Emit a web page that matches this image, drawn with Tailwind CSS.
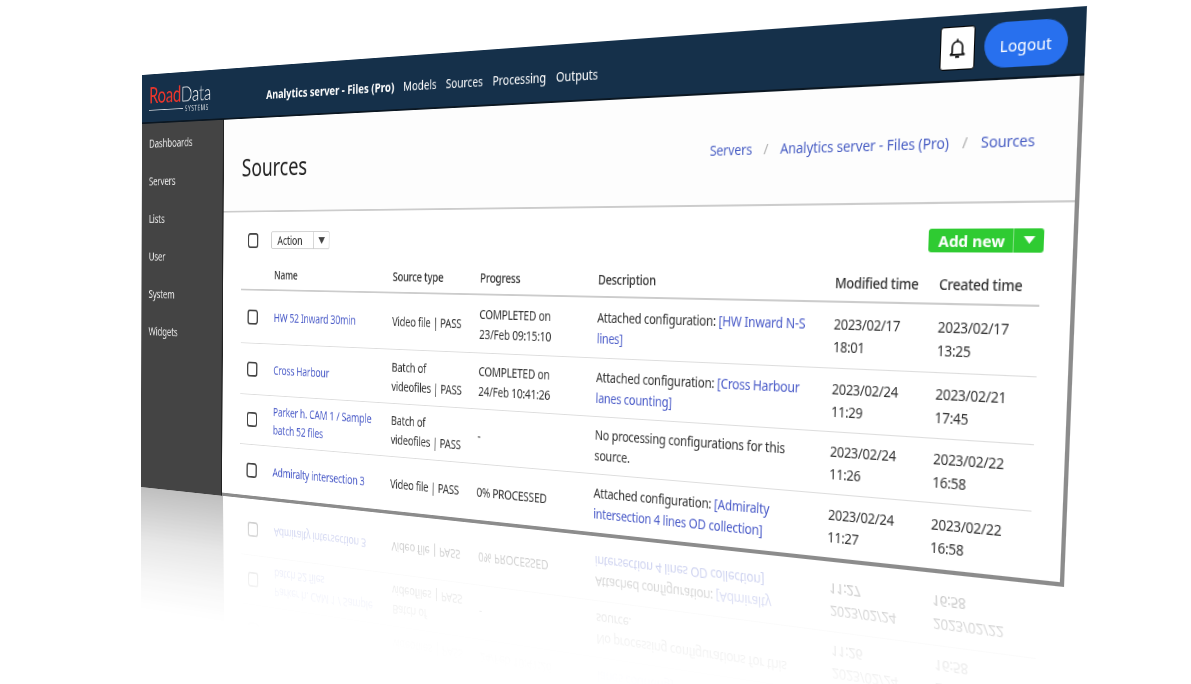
<!DOCTYPE html>
<html lang="en">
<head>
<meta charset="utf-8">
<script src="https://cdn.jsdelivr.net/npm/@tailwindcss/browser@4"></script>
<title>Sources</title>
</head>
<body class="bg-white overflow-hidden w-[1191px] h-[684px] relative font-['Noto_Sans',sans-serif] text-[13.5px] leading-[22px] tracking-[-0.27px] text-[#333]">

<!-- reflection -->
<div class="absolute left-0 top-0 w-[1200px] h-[520px] origin-top-left [transform:matrix3d(0.521442,-0.058967,0,-0.00024477,0.0025554,-0.77725,0,0.00003176,0,0,1,0,142,899.22,0,1)] flex flex-col overflow-hidden bg-white [mask-image:linear-gradient(to_top,rgba(0,0,0,0.34),rgba(0,0,0,0.13)_13%,rgba(0,0,0,0.04)_23%,transparent_30%)] [filter:blur(0.4px)]">
  <div class="h-[61px] shrink-0"></div>
  <div class="flex-1 flex min-h-0">
    <div class="w-[145px] shrink-0 bg-[#444]"></div>
    <div class="flex-1 min-w-0 bg-white">
      <div class="h-[206px]"></div>
      <div class="ml-[30px] mr-[29px] grid grid-cols-[54px_183px_124px_155px_274px_107px_97px] items-center h-[64px] border-b border-[#ddd]">
        <span class="ml-[11px] w-[17px] h-[18px] rounded-[4px] border-2 border-[#444]"></span>
        <span class="text-[#4a5bc8]">HW 52 Inward 30min</span><span>Video file | PASS</span><span>COMPLETED on<br>23/Feb 09:15:10</span>
        <span>Attached configuration: <span class="text-[#4a5bc8]">[HW Inward N-S<br>lines]</span></span><span>2023/02/17<br>18:01</span><span>2023/02/17<br>13:25</span>
      </div>
      <div class="ml-[30px] mr-[29px] grid grid-cols-[54px_183px_124px_155px_274px_107px_97px] items-center h-[61px] border-b border-[#ddd]">
        <span class="ml-[11px] w-[17px] h-[18px] rounded-[4px] border-2 border-[#444]"></span>
        <span class="text-[#4a5bc8]">Cross Harbour</span><span>Batch of<br>videofiles | PASS</span><span>COMPLETED on<br>24/Feb 10:41:26</span>
        <span>Attached configuration: <span class="text-[#4a5bc8]">[Cross Harbour<br>lanes counting]</span></span><span>2023/02/24<br>11:29</span><span>2023/02/21<br>17:45</span>
      </div>
      <div class="ml-[30px] mr-[29px] grid grid-cols-[54px_183px_124px_155px_274px_107px_97px] items-center h-[60px] border-b border-[#ddd]">
        <span class="ml-[11px] w-[17px] h-[18px] rounded-[4px] border-2 border-[#444]"></span>
        <span class="text-[#4a5bc8]">Parker h. CAM 1 / Sample<br>batch 52 files</span><span>Batch of<br>videofiles | PASS</span><span>-</span>
        <span>No processing configurations for this<br>source.</span><span>2023/02/24<br>11:26</span><span>2023/02/22<br>16:58</span>
      </div>
      <div class="ml-[30px] mr-[29px] grid grid-cols-[54px_183px_124px_155px_274px_107px_97px] items-center h-[61px]">
        <span class="ml-[11px] w-[17px] h-[18px] rounded-[4px] border-2 border-[#444]"></span>
        <span class="text-[#4a5bc8]">Admiralty intersection 3</span><span>Video file | PASS</span><span>0% PROCESSED</span>
        <span>Attached configuration: <span class="text-[#4a5bc8]">[Admiralty<br>intersection 4 lines OD collection]</span></span><span>2023/02/24<br>11:27</span><span>2023/02/22<br>16:58</span>
      </div>
    </div>
  </div>
</div>

<!-- page -->
<div class="absolute left-0 top-0 w-[1200px] h-[520px] origin-top-left [transform:matrix3d(0.521442,-0.058968,0,-0.00024477,0.0025554,0.807775,0,0.00003176,0,0,1,0,142,75,0,1)] flex flex-col overflow-hidden bg-white [filter:blur(0.4px)]">
  <header class="h-[61px] shrink-0 bg-[#15304a] flex items-center pr-[16px] border-b-2 border-[#0b1722] text-white tracking-normal">
    <div class="w-[212px] shrink-0 pl-[13px] pt-[4px]">
      <div class="font-['Lato',sans-serif] text-[26px] leading-[26px] tracking-[-0.4px]"><span class="text-[#f0362b]">Road</span><span class="font-light">Data</span></div>
      <div class="flex items-center gap-[3px] h-[12px]"><span class="h-[1.5px] w-[60px] bg-white/80"></span><span class="text-[8px] leading-[10px] tracking-[1px] text-white/80">SYSTEMS</span></div>
    </div>
    <nav class="mt-[8px] flex items-center gap-[13px] whitespace-nowrap text-[13.9px]">
      <span class="font-bold text-[14.4px]">Analytics server - Files (Pro)</span>
      <span>Models</span><span>Sources</span><span>Processing</span><span>Outputs</span>
    </nav>
    <div class="ml-auto flex items-center gap-[8px]">
      <button class="w-[34px] h-[40px] mr-[1px] bg-white rounded-[3px] border border-black flex items-center justify-center">
        <svg class="w-[20px] h-[20px]" viewBox="0 0 24 24" fill="none" stroke="#111" stroke-width="2" stroke-linecap="round" stroke-linejoin="round"><path d="M6 17V10.5a6 6 0 0 1 12 0V17l2 2H4z"/><path d="M12 2.5v2"/><path d="M10.5 21.5h3"/></svg>
      </button>
      <button class="w-[78px] h-[41px] bg-[#2870ee] rounded-full text-white text-[14.5px] flex items-center justify-center">Logout</button>
    </div>
  </header>
  <div class="flex-1 flex min-h-0">
    <aside class="w-[143px] shrink-0 bg-[#444] text-[#e8e8e8] pt-[1px] pl-[13px] border-r-2 border-[#222] text-[14px]">
      <div class="h-[47px] flex items-center">Dashboards</div>
      <div class="h-[47px] flex items-center">Servers</div>
      <div class="h-[47px] flex items-center">Lists</div>
      <div class="h-[47px] flex items-center">User</div>
      <div class="h-[47px] flex items-center">System</div>
      <div class="h-[47px] flex items-center">Widgets</div>
    </aside>
    <main class="flex-1 min-w-0 bg-[#fdfdfd] border-r-[4px] border-b-[4px] border-[#8c8c8c]">
      <div class="h-[112px] border-b-2 border-[#ccc] flex items-center justify-between pl-[30px] pr-[39px]">
        <h1 class="text-[28.5px] leading-[36px] text-[#222] mt-[5px] tracking-normal">Sources</h1>
        <div class="flex items-center gap-[13px] text-[#4a5fc4] text-[14px] mt-[1px] tracking-[-0.1px]">
          <span>Servers</span><span class="text-[#aaa]">/</span><span>Analytics server - Files (Pro)</span><span class="text-[#aaa]">/</span><span>Sources</span>
        </div>
      </div>
      <div class="bg-white pl-[30px] pr-[29px]">
        <div class="pt-[22px] flex items-center h-[45px]">
          <span class="ml-[11px] w-[17px] h-[18px] rounded-[4px] border-2 border-[#444] bg-white"></span>
          <div class="ml-[21px] w-[92px] h-[21px] border border-[#ccc] rounded-[2px] flex items-center text-[14px]">
            <span class="flex-1 pl-[9px]">Action</span>
            <span class="w-[24px] h-full border-l border-[#ccc] flex items-center justify-center"><svg class="w-[10px] h-[8px]" viewBox="0 0 10 8"><path d="M0 0h10L5 8z" fill="#444"/></svg></span>
          </div>
          <div class="ml-auto mr-[-2px] w-[111px] h-[22px] rounded-[3px] bg-[#2fcb32] text-white font-bold text-[15px] tracking-normal flex items-center">
            <span class="flex-1 text-center pl-[2px]">Add new</span>
            <span class="w-[1px] h-full bg-white/40"></span>
            <span class="w-[28px] flex justify-center"><svg class="w-[11px] h-[7px]" viewBox="0 0 14 9"><path d="M0 0h14L7 9z" fill="#fff"/></svg></span>
          </div>
        </div>
        <div class="grid grid-cols-[54px_183px_124px_155px_274px_107px_97px] items-end h-[49px] pb-[6px] border-b-2 border-[#ccc] font-medium">
          <span></span><span>Name</span><span>Source type</span><span>Progress</span><span>Description</span><span>Modified time</span><span>Created time</span>
        </div>
        <div class="grid grid-cols-[54px_183px_124px_155px_274px_107px_97px] items-center h-[64px] border-b border-[#ddd]">
          <span class="ml-[11px] w-[17px] h-[18px] rounded-[4px] border-2 border-[#444]"></span>
          <span class="text-[#4a5bc8]">HW 52 Inward 30min</span><span>Video file | PASS</span><span>COMPLETED on<br>23/Feb 09:15:10</span>
          <span>Attached configuration: <span class="text-[#4a5bc8]">[HW Inward N-S<br>lines]</span></span><span>2023/02/17<br>18:01</span><span>2023/02/17<br>13:25</span>
        </div>
        <div class="grid grid-cols-[54px_183px_124px_155px_274px_107px_97px] items-center h-[62px] border-b border-[#ddd]">
          <span class="ml-[11px] w-[17px] h-[18px] rounded-[4px] border-2 border-[#444]"></span>
          <span class="text-[#4a5bc8]">Cross Harbour</span><span>Batch of<br>videofiles | PASS</span><span>COMPLETED on<br>24/Feb 10:41:26</span>
          <span>Attached configuration: <span class="text-[#4a5bc8]">[Cross Harbour<br>lanes counting]</span></span><span>2023/02/24<br>11:29</span><span>2023/02/21<br>17:45</span>
        </div>
        <div class="grid grid-cols-[54px_183px_124px_155px_274px_107px_97px] items-center h-[61px] border-b border-[#ddd]">
          <span class="ml-[11px] w-[17px] h-[18px] rounded-[4px] border-2 border-[#444]"></span>
          <span class="text-[#4a5bc8]">Parker h. CAM 1 / Sample<br>batch 52 files</span><span>Batch of<br>videofiles | PASS</span><span>-</span>
          <span>No processing configurations for this<br>source.</span><span>2023/02/24<br>11:26</span><span>2023/02/22<br>16:58</span>
        </div>
        <div class="grid grid-cols-[54px_183px_124px_155px_274px_107px_97px] items-center h-[61px]">
          <span class="ml-[11px] w-[17px] h-[18px] rounded-[4px] border-2 border-[#444]"></span>
          <span class="text-[#4a5bc8]">Admiralty intersection 3</span><span>Video file | PASS</span><span>0% PROCESSED</span>
          <span>Attached configuration: <span class="text-[#4a5bc8]">[Admiralty<br>intersection 4 lines OD collection]</span></span><span>2023/02/24<br>11:27</span><span>2023/02/22<br>16:58</span>
        </div>
      </div>
    </main>
  </div>
</div>
</body>
</html>
